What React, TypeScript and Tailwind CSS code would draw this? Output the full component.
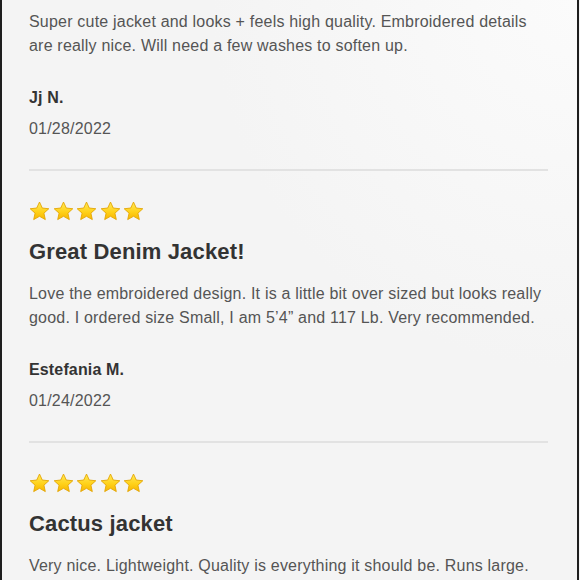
import React from "react";

interface Review {
  stars?: number;
  title?: string;
  body: string[];
  author: string;
  date: string;
}

const REVIEWS: Review[] = [
  {
    body: [
      "Super cute jacket and looks + feels high quality. Embroidered details",
      "are really nice. Will need a few washes to soften up.",
    ],
    author: "Jj N.",
    date: "01/28/2022",
  },
  {
    stars: 5,
    title: "Great Denim Jacket!",
    body: [
      "Love the embroidered design. It is a little bit over sized but looks really",
      "good. I ordered size Small, I am 5\u20194\u201D and 117 Lb. Very recommended.",
    ],
    author: "Estefania M.",
    date: "01/24/2022",
  },
  {
    stars: 5,
    title: "Cactus jacket",
    body: ["Very nice. Lightweight. Quality is everything it should be. Runs large."],
    author: "",
    date: "",
  },
];

function Star({ id }: { id: string }) {
  return (
    <svg width="21" height="20" viewBox="0 0 24 23" className="shrink-0">
      <defs>
        <linearGradient id={id} x1="0" y1="0" x2="0" y2="1">
          <stop offset="0%" stopColor="#ffe95a" />
          <stop offset="55%" stopColor="#ffd21a" />
          <stop offset="100%" stopColor="#f7b500" />
        </linearGradient>
      </defs>
      <path
        d="M12 1.2l3.2 6.9 7.5.8-5.6 5.1 1.6 7.4L12 17.6l-6.7 3.8 1.6-7.4-5.6-5.1 7.5-.8z"
        fill={`url(#${id})`}
        stroke="#e3a400"
        strokeWidth="1"
        strokeLinejoin="round"
      />
    </svg>
  );
}

function ReviewBlock({ review, index }: { review: Review; index: number }) {
  return (
    <div className="flex flex-col">
      {review.stars && (
        <div className="flex gap-[2.5px] h-5 mb-[17px]">
          {Array.from({ length: review.stars }).map((_, i) => (
            <Star key={i} id={`star-${index}-${i}`} />
          ))}
        </div>
      )}
      {review.title && (
        <h2 className="text-[22px] leading-[28px] font-bold tracking-[0.15px] text-[#333] mb-4">
          {review.title}
        </h2>
      )}
      <div className="text-[16px] leading-6 tracking-[0.2px] text-[#555]">
        {review.body.map((line, i) => (
          <div key={i} className="whitespace-nowrap">
            {line}
          </div>
        ))}
      </div>
      {review.author && (
        <>
          <div className="mt-7 text-[16px] leading-6 font-bold tracking-[0.15px] text-[#333]">
            {review.author}
          </div>
          <div className="mt-[7px] text-[16px] leading-6 tracking-[0.2px] text-[#555]">{review.date}</div>
        </>
      )}
    </div>
  );
}

export default function App() {
  return (
    <div className="w-[580px] h-[580px] overflow-hidden bg-[#f4f4f4]">
      <div
        className="w-[579px] h-[580px] border-l-2 border-r-2 border-[#1e1e1e] bg-[radial-gradient(ellipse_at_top_right,#fbfbfb_0%,#f4f4f4_45%)] pl-[27px] pt-[10px]"
        style={{ fontFamily: '"Liberation Sans", Arial, Helvetica, sans-serif' }}
      >
        <div className="w-[519px] flex flex-col">
          {REVIEWS.map((r, i) => (
            <React.Fragment key={i}>
              {i > 0 && <div className="h-[2px] bg-[#e2e2e2] mt-[28px] mb-[30px]" />}
              <ReviewBlock review={r} index={i} />
            </React.Fragment>
          ))}
        </div>
      </div>
    </div>
  );
}
